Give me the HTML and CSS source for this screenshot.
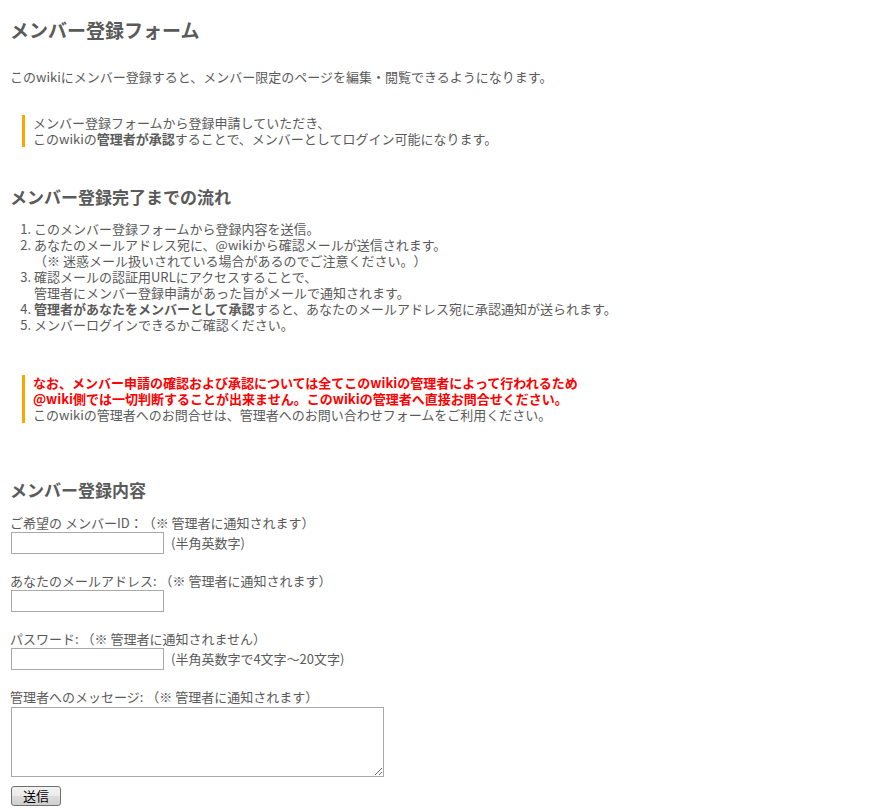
FILE: index.html
```html
<!DOCTYPE html>
<html lang="ja">
    <head>
        <title>メンバー登録フォーム</title>
        <meta charset="UTF-8">
        <link rel="stylesheet" href="styles.css">
    </head>
    <body>
        <h2 class="page-title">メンバー登録フォーム</h2>
        <p class="intro">このwikiにメンバー登録すると、メンバー限定のページを編集・閲覧できるようになります。</p>

        <div class="note">
            メンバー登録フォームから登録申請していただき、<br>
            このwikiの<strong>管理者が承認</strong>することで、メンバーとしてログイン可能になります。
        </div>

        <h3 class="section-title flow-title">メンバー登録完了までの流れ</h3>
        <ol class="flow">
            <li>このメンバー登録フォームから登録内容を送信。</li>
            <li>あなたのメールアドレス宛に、@wikiから確認メールが送信されます。<br>（※ 迷惑メール扱いされている場合があるのでご注意ください。）</li>
            <li>確認メールの認証用URLにアクセスすることで、<br>管理者にメンバー登録申請があった旨がメールで通知されます。</li>
            <li><strong>管理者があなたをメンバーとして承認</strong>すると、あなたのメールアドレス宛に承認通知が送られます。</li>
            <li>メンバーログインできるかご確認ください。</li>
        </ol>

        <div class="note warn-note">
            <strong class="warn">なお、メンバー申請の確認および承認については全てこのwikiの管理者によって行われるため<br>
            @wiki側では一切判断することが出来ません。このwikiの管理者へ直接お問合せください。</strong><br>
            このwikiの管理者へのお問合せは、管理者へのお問い合わせフォームをご利用ください。
        </div>

        <h3 class="section-title form-title">メンバー登録内容</h3>
        <form class="member-form">
            <div class="field">
                <label for="member-id">ご希望の メンバーID：（※ 管理者に通知されます）</label>
                <div class="field-row">
                    <input type="text" id="member-id">
                    <span class="hint">(半角英数字)</span>
                </div>
            </div>
            <div class="field">
                <label for="member-mail">あなたのメールアドレス: （※ 管理者に通知されます）</label>
                <div class="field-row">
                    <input type="text" id="member-mail">
                </div>
            </div>
            <div class="field">
                <label for="member-pass">パスワード: （※ 管理者に通知されません）</label>
                <div class="field-row">
                    <input type="password" id="member-pass">
                    <span class="hint">(半角英数字で4文字～20文字)</span>
                </div>
            </div>
            <div class="field last-field">
                <label for="member-msg">管理者へのメッセージ: （※ 管理者に通知されます）</label>
                <textarea id="member-msg"></textarea>
            </div>
            <button type="button" class="submit-btn">送信</button>
        </form>
    </body>
</html>
```

FILE: styles.css
```css
* {
    box-sizing: border-box;
}

body {
    margin: 0;
    padding: 18px 10px 0;
    color: #5a5a5a;
    font-family: "Noto Sans CJK JP", "Noto Sans", sans-serif;
    font-size: 13px;
    line-height: 16px;
    background: #fff;
    text-spacing-trim: space-all;
}

.page-title {
    margin: 0;
    font-size: 19px;
    line-height: 24px;
    font-weight: bold;
}

.intro {
    margin: 27px 0 0;
}

.note {
    margin: 30px 0 0 12px;
    padding-left: 8px;
    border-left: 3px solid #ffa500;
}

.note strong {
    font-weight: bold;
}

.section-title {
    margin: 0;
    font-size: 17px;
    line-height: 22px;
    font-weight: bold;
}

.flow-title {
    margin-top: 39px;
}

.flow {
    margin: 13px 0 0;
    padding-left: 24px;
}

.warn-note {
    margin-top: 42px;
}

.warn {
    color: #f00;
}

.form-title {
    margin-top: 56px;
}

.member-form {
    margin-top: 12px;
}

.field {
    margin-bottom: 17px;
}

.field label {
    display: block;
    height: 19px;
    line-height: 19px;
}

.field-row {
    display: flex;
    align-items: center;
    gap: 7px;
}

.field input {
    width: 153px;
    height: 22px;
    margin: 0 0 0 1px;
    border: 1px solid #a9a9a9;
    font-family: inherit;
    font-size: 13px;
}

.field textarea {
    display: block;
    width: 373px;
    height: 70px;
    margin: 0 0 0 1px;
    border: 1px solid #a9a9a9;
    font-family: inherit;
    font-size: 13px;
}

.last-field {
    margin-bottom: 9px;
}

.last-field label {
    height: 20px;
    line-height: 20px;
}

.submit-btn {
    width: 50px;
    height: 20px;
    margin-left: 1px;
    padding: 0;
    border: 1px solid #707070;
    border-radius: 3px;
    background: linear-gradient(#f2f2f2 0%, #ebebeb 50%, #dddddd 51%, #cfcfcf 100%);
    color: #000;
    font-family: inherit;
    font-size: 13px;
    line-height: 18px;
}
```
